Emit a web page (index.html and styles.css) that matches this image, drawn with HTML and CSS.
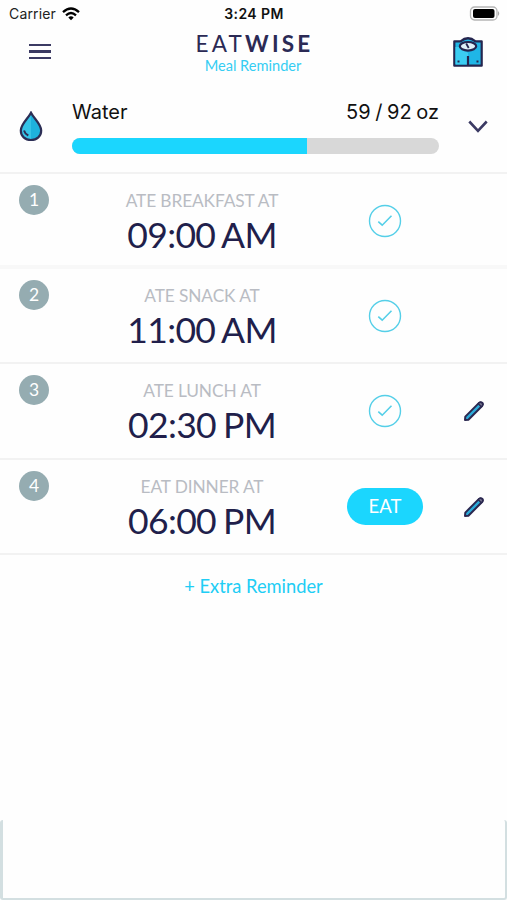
FILE: index.html
```html
<!DOCTYPE html>
<html lang="en">
  <head>
    <meta charset="UTF-8" />
    <meta name="viewport" content="width=device-width, initial-scale=1.0" />
    <title>EatWise - Meal Reminder</title>
    <link rel="stylesheet" href="styles.css">
  </head>
  <body>
    <!-- Shared icons -->
    <svg class="icon-defs" width="0" height="0">
      <symbol id="icon-check" viewBox="0 0 34 34">
        <circle cx="17" cy="17" r="15.5" fill="none" stroke="#55cfe8" stroke-width="1.4" />
        <path d="M10.3 17.6 L14.2 21.2 L23.5 11.8" fill="none" stroke="#55cfe8" stroke-width="1.6" />
      </symbol>
      <symbol id="icon-pencil" viewBox="0 0 22 22">
        <path d="M2 20 L2.3 16.6 L16 2.9 Q17.7 1.5 19.2 2.8 Q20.6 4.3 19.1 6 L5.4 19.7 Z" fill="#2cabd9" stroke="#2b2850" stroke-width="2" stroke-linejoin="round" />
        <path d="M15.3 3.7 L18.3 6.7 L19.2 5.8 Q20.4 4.3 19 3 Q17.6 1.7 16.1 2.8 Z" fill="#777590" stroke="#2b2850" stroke-width="1.4" />
      </symbol>
    </svg>

    <div class="status-bar">
      <div class="carrier">
        <span>Carrier</span>
        <svg width="18" height="14" viewBox="0 0 18 14" fill="none" stroke="#000" stroke-width="2.3">
          <path d="M1 5.2 Q9 -2.2 17 5.2" />
          <path d="M4 8.3 Q9 3.8 14 8.3" />
          <path d="M9 13.2 L6.3 10.4 Q9 8.2 11.7 10.4 Z" fill="#000" stroke="none" />
        </svg>
      </div>
      <div class="clock">3:24 PM</div>
      <div class="battery">
        <svg width="32" height="15" viewBox="0 0 32 15">
          <rect x="1.5" y="1" width="26.5" height="13" rx="4" fill="#fff" stroke="#b5b5b5" stroke-width="1.3" />
          <rect x="4" y="3" width="21.5" height="9" rx="2" fill="#000" />
          <path d="M29 5 Q31.5 7.5 29 10 Z" fill="#aaa" />
        </svg>
      </div>
    </div>

    <div class="header">
      <div class="menu">
        <span></span>
        <span></span>
        <span></span>
      </div>
      <div class="brand">
        <div class="logo">EAT<b>WISE</b></div>
        <div class="subtitle">Meal Reminder</div>
      </div>
      <svg class="scale" width="30" height="30" viewBox="0 0 30 30" stroke="#25264f" stroke-width="2.2" stroke-linejoin="round">
        <path d="M1.3 4.3 H7.5 Q15 -1.8 22.5 4.3 H28.7 V28.7 H1.3 Z" fill="#1fb6e6" />
        <path d="M2.5 10 H6 L15 16 V27.5 H2.5 Z" fill="#3bcdf2" stroke="none" />
        <ellipse cx="15" cy="9.3" rx="8.2" ry="4.3" fill="#dff1f8" />
        <path d="M13.2 6.5 L15.7 11" fill="none" stroke-width="1.8" />
        <path d="M15 19 V28" fill="none" />
        <path d="M4.5 24.5 H6.5 M23.5 24.5 H25.5" fill="none" stroke-width="2" />
      </svg>
    </div>

    <div class="water">
      <svg class="drop" width="24" height="31" viewBox="0 0 24 31">
        <path d="M12 1.8 C9.5 7 1.8 13.2 1.8 19.5 C1.8 25.2 6 29 12 29 C18 29 22.2 25.2 22.2 19.5 C22.2 13.2 14.5 7 12 1.8 Z" fill="#1eb2dd" />
        <path d="M12 2 C9.5 7 2 13 2 19.5 C2 25.2 6 29 12 29 Z" fill="#35c4e8" />
        <path d="M12 1.8 C9.5 7 1.8 13.2 1.8 19.5 C1.8 25.2 6 29 12 29 C18 29 22.2 25.2 22.2 19.5 C22.2 13.2 14.5 7 12 1.8 Z" fill="none" stroke="#2c2e55" stroke-width="2.2" />
        <path d="M5 19.5 Q6 23 9.3 24.5" fill="none" stroke="#2c2e55" stroke-width="2" />
      </svg>
      <div class="water-info">
        <div class="water-text">
          <span>Water</span>
          <span class="amount">59 / 92 oz</span>
        </div>
        <div class="progress">
          <div class="progress-fill" style="width: 64.1%"></div>
        </div>
      </div>
      <svg class="chevron" width="20" height="14" viewBox="0 0 20 14">
        <path d="M1.3 1.5 L10 10.8 L18.7 1.5" fill="none" stroke="#3b3a63" stroke-width="2.6" />
      </svg>
    </div>

    <div class="meals">
      <div class="meal thick">
        <div class="number">1</div>
        <div class="meal-info">
          <div class="meal-label">ATE BREAKFAST AT</div>
          <div class="meal-time">09:00 AM</div>
        </div>
        <svg class="check"><use href="#icon-check" /></svg>
      </div>
      <div class="meal">
        <div class="number">2</div>
        <div class="meal-info">
          <div class="meal-label">ATE SNACK AT</div>
          <div class="meal-time">11:00 AM</div>
        </div>
        <svg class="check"><use href="#icon-check" /></svg>
      </div>
      <div class="meal">
        <div class="number">3</div>
        <div class="meal-info">
          <div class="meal-label">ATE LUNCH AT</div>
          <div class="meal-time">02:30 PM</div>
        </div>
        <svg class="check"><use href="#icon-check" /></svg>
        <svg class="pencil"><use href="#icon-pencil" /></svg>
      </div>
      <div class="meal">
        <div class="number">4</div>
        <div class="meal-info">
          <div class="meal-label">EAT DINNER AT</div>
          <div class="meal-time">06:00 PM</div>
        </div>
        <button class="eat">EAT</button>
        <svg class="pencil"><use href="#icon-pencil" /></svg>
      </div>
    </div>

    <div class="extra">+ Extra Reminder</div>

    <div class="banner"></div>
  </body>
</html>
```
FILE: styles.css
```css
* {
  box-sizing: border-box;
}

body {
  margin: 0;
  height: 900px;
  display: flex;
  flex-direction: column;
  background-color: #fefefe;
  font-family: Lato, sans-serif;
  overflow: hidden;
}

svg {
  display: block;
}

.icon-defs {
  position: absolute;
}

.status-bar {
  display: grid;
  grid-template-columns: 1fr auto 1fr;
  align-items: center;
  height: 27px;
  padding: 0 6px 0 9px;
  font-family: Inter, sans-serif;
  font-size: 14px;
  color: #222;
}

.carrier {
  display: flex;
  align-items: center;
  gap: 6px;
  letter-spacing: 0.15px;
}

.clock {
  margin-right: 2px;
  font-weight: 600;
  letter-spacing: 0.4px;
  color: #111;
}

.battery {
  justify-self: end;
}

.header {
  display: flex;
  justify-content: space-between;
  height: 57px;
  padding: 0 24px 0 29px;
}

.menu {
  display: flex;
  flex-direction: column;
  gap: 4px;
  width: 54px;
  padding-top: 17px;
}

.menu span {
  width: 22px;
  height: 2.4px;
  background-color: #3b3a63;
}

.brand {
  text-align: center;
  padding-top: 4px;
  margin-right: 6px;
}

.logo {
  font-size: 22.5px;
  line-height: 26px;
  letter-spacing: 3.2px;
  margin-right: -3px;
  color: #2b2a55;
}

.subtitle {
  font-size: 14.6px;
  line-height: 18px;
  color: #35cdf3;
}

.scale {
  margin: 10px 0 0 24px;
}

.water {
  display: flex;
  height: 90px;
  padding: 0 19px;
  border-bottom: 2px solid #f2f2f2;
}

.drop {
  margin-top: 27px;
}

.water-info {
  width: 367px;
  margin-left: 29px;
  padding-top: 14px;
}

.water-text {
  display: flex;
  justify-content: space-between;
  font-family: Inter, sans-serif;
  font-size: 20px;
  line-height: 28px;
  color: #111;
}

.amount {
  word-spacing: -1px;
}

.progress {
  height: 16px;
  margin-top: 12px;
  border-radius: 8px;
  background-color: #d8d8d8;
  overflow: hidden;
}

.progress-fill {
  height: 100%;
  background-color: #1bd6fe;
}

.chevron {
  margin: 36px 0 0 29px;
}

.meal {
  display: grid;
  grid-template-columns: 67px 270px 96px 74px;
  height: 95.2px;
  border-bottom: 2px solid #f2f2f2;
}

.meal.thick {
  border-bottom: 4px solid #f8f8f8;
}

.number {
  width: 30px;
  height: 30px;
  margin: 11px 0 0 19px;
  border-radius: 50%;
  background-color: #95acb1;
  color: #fff;
  font-size: 17.5px;
  line-height: 30px;
  text-align: center;
}

.meal-info {
  padding-top: 15px;
  text-align: center;
}

.meal-label {
  font-size: 17.3px;
  line-height: 24px;
  letter-spacing: -0.1px;
  color: #b9bcc3;
}

.meal-time {
  font-size: 35.5px;
  line-height: 43px;
  letter-spacing: -0.65px;
  word-spacing: -1.5px;
  color: #211f4b;
}

.check {
  width: 34px;
  height: 34px;
  margin: 30px auto 0;
}

.eat {
  width: 76px;
  height: 37px;
  margin: 28px auto 0;
  padding: 0;
  border: none;
  border-radius: 19px;
  background-color: #1bd6fe;
  color: #fff;
  font-family: Lato, sans-serif;
  font-size: 18.5px;
}

.pencil {
  width: 22px;
  height: 22px;
  margin: 36px 0 0 30px;
}

.extra {
  margin-top: 19px;
  font-size: 18.3px;
  line-height: 24px;
  text-align: center;
  color: #20cdf5;
}

.banner {
  height: 80px;
  margin-top: auto;
  border: solid #d3dfe1;
  border-width: 0 2px 2px 3px;
  border-radius: 3px;
}
```
